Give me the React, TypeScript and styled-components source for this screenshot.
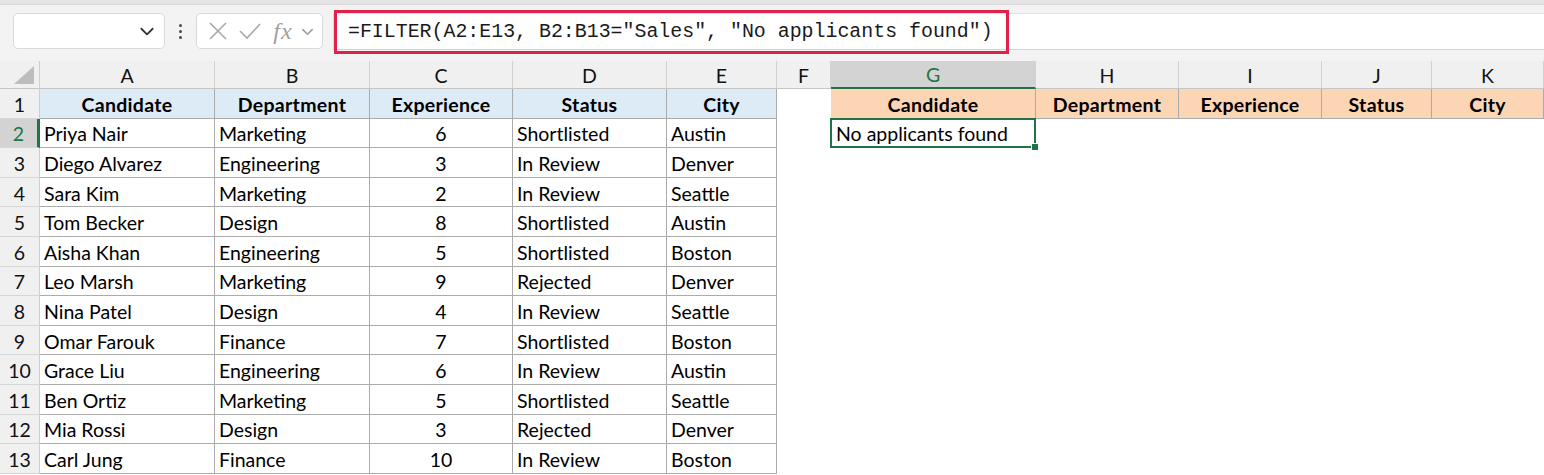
import React from "react";
import styled, { createGlobalStyle } from "styled-components";

const Global = createGlobalStyle`
  html, body { margin: 0; padding: 0; background: #ffffff; }
  body { font-family: Lato, "Open Sans", sans-serif; }
  * { box-sizing: border-box; }
`;

const Page = styled.div`
  width: 1544px;
  height: 475px;
  overflow: hidden;
  background: #ffffff;
  display: flex;
  flex-direction: column;
`;

const TopStrip = styled.div`
  height: 5px;
  background: #e4e4e4;
  border-bottom: 1px solid #d9d9d9;
`;

const FormulaBar = styled.div`
  height: 56px;
  background: #f3f3f3;
  display: flex;
  align-items: flex-start;
  padding: 8px 0 0 13px;
`;

const Box = styled.div<{ $w: number }>`
  width: ${(p) => p.$w}px;
  height: 36px;
  background: #ffffff;
  border: 1px solid #dadada;
  border-radius: 5px;
  display: flex;
  align-items: center;
`;

const NameBox = styled(Box)`
  justify-content: flex-end;
  padding-right: 8px;
`;

const Dots = styled.div`
  width: 31px;
  height: 36px;
  display: flex;
  flex-direction: column;
  align-items: center;
  justify-content: center;
  gap: 3px;
  span {
    width: 3px;
    height: 3px;
    border-radius: 50%;
    background: #4a4a4a;
  }
`;

const FxBox = styled(Box)`
  padding-left: 7px;
`;

const IconSlot = styled.div<{ $w: number }>`
  width: ${(p) => p.$w}px;
  display: flex;
  align-items: center;
  justify-content: center;
`;

const Fx = styled.span`
  font-family: "Liberation Serif", "DejaVu Serif", serif;
  font-style: italic;
  font-size: 24px;
  color: #a0a0a0;
  letter-spacing: 1px;
`;

const Input = styled.div`
  margin-left: 10px;
  flex: 1;
  height: 37px;
  background: #ffffff;
  border-top: 1px solid #e2e2e2;
  border-bottom: 1px solid #d4d4d4;
  border-left: 1px solid #dadada;
  display: flex;
  align-items: center;
  overflow: visible;
`;

const Highlight = styled.div`
  height: 44px;
  width: 675px;
  flex: none;
  border: 3px solid #e0214c;
  display: flex;
  align-items: center;
  padding-left: 11px;
  font-family: "Liberation Mono", "DejaVu Sans Mono", monospace;
  font-size: 19.9px;
  color: #1a1a1a;
  white-space: pre;
`;

const Sheet = styled.div`
  display: grid;
  grid-template-columns: 40px 175px 155px 143px 154px 110px 54px 205px 143px 143px 110px 1fr;
  grid-template-rows: 28px repeat(13, 29.6px);
  font-family: Lato, "Open Sans", sans-serif;
  font-size: 19.5px;
  color: #000;
`;

const Corner = styled.div`
  background: #f0f0f0;
  border-right: 1px solid #cfcfcf;
  border-bottom: 1px solid #c6c6c6;
  display: flex;
  align-items: flex-end;
  justify-content: flex-end;
  padding: 0 5px 4px 0;
`;

const ColHead = styled.div<{ $sel?: boolean }>`
  background: ${(p) => (p.$sel ? "#d3d3d3" : "#f0f0f0")};
  color: ${(p) => (p.$sel ? "#217346" : "#111")};
  border-right: 1px solid #d2d2d2;
  border-bottom: ${(p) => (p.$sel ? "2px solid #217346" : "1px solid #c6c6c6")};
  display: flex;
  align-items: center;
  justify-content: center;
  padding-top: 1px;
`;

const RowHead = styled.div<{ $sel?: boolean }>`
  background: ${(p) => (p.$sel ? "#d3d3d3" : "#f0f0f0")};
  color: ${(p) => (p.$sel ? "#217346" : "#111")};
  border-right: ${(p) => (p.$sel ? "3px solid #217346" : "1px solid #cfcfcf")};
  border-bottom: 1px solid #d6d6d6;
  display: flex;
  align-items: center;
  justify-content: center;
  padding-top: 2px;
`;

type Tone = "blue" | "peach" | "plain" | "none";

const toneBg: Record<Tone, string> = {
  blue: "#ddebf7",
  peach: "#fcd5b4",
  plain: "#ffffff",
  none: "#ffffff",
};

const Cell = styled.div<{ $tone: Tone; $bold?: boolean; $center?: boolean }>`
  background: ${(p) => toneBg[p.$tone]};
  font-weight: ${(p) => (p.$bold ? 700 : 400)};
  letter-spacing: ${(p) => (p.$bold ? "0.3px" : "0")};
  display: flex;
  align-items: center;
  justify-content: ${(p) => (p.$center ? "center" : "flex-start")};
  padding: 2px 4px 0;
  white-space: nowrap;
  border-right: ${(p) => (p.$tone === "none" ? "none" : "1px solid #ababab")};
  border-bottom: ${(p) => (p.$tone === "none" ? "none" : "1px solid #ababab")};
`;

const Selected = styled.div`
  position: relative;
  background: #ffffff;
  border: 2px solid #217346;
  margin: -1px 0 0 -1px;
  display: flex;
  align-items: center;
  padding: 2px 4px 0;
  white-space: nowrap;
`;

const Handle = styled.span`
  position: absolute;
  right: -5px;
  bottom: -5px;
  width: 8px;
  height: 8px;
  background: #217346;
  border: 1px solid #ffffff;
`;

const Chevron = ({ color = "#333", size = 16 }: { color?: string; size?: number }) => (
  <svg width={size} height={size} viewBox="0 0 16 16" fill="none">
    <path d="M3 6l5 5 5-5" stroke={color} strokeWidth="1.6" strokeLinecap="round" strokeLinejoin="round" />
  </svg>
);

const cols = ["A", "B", "C", "D", "E", "F", "G", "H", "I", "J", "K"];
const headers = ["Candidate", "Department", "Experience", "Status", "City"];

const data: [string, string, number, string, string][] = [
  ["Priya Nair", "Marketing", 6, "Shortlisted", "Austin"],
  ["Diego Alvarez", "Engineering", 3, "In Review", "Denver"],
  ["Sara Kim", "Marketing", 2, "In Review", "Seattle"],
  ["Tom Becker", "Design", 8, "Shortlisted", "Austin"],
  ["Aisha Khan", "Engineering", 5, "Shortlisted", "Boston"],
  ["Leo Marsh", "Marketing", 9, "Rejected", "Denver"],
  ["Nina Patel", "Design", 4, "In Review", "Seattle"],
  ["Omar Farouk", "Finance", 7, "Shortlisted", "Boston"],
  ["Grace Liu", "Engineering", 6, "In Review", "Austin"],
  ["Ben Ortiz", "Marketing", 5, "Shortlisted", "Seattle"],
  ["Mia Rossi", "Design", 3, "Rejected", "Denver"],
  ["Carl Jung", "Finance", 10, "In Review", "Boston"],
];

export default function App() {
  const rows: React.ReactNode[] = [];

  rows.push(<RowHead key="rh1">1</RowHead>);
  headers.forEach((h) =>
    rows.push(
      <Cell key={"b" + h} $tone="blue" $bold $center>
        {h}
      </Cell>
    )
  );
  rows.push(<Cell key="f1" $tone="none" />);
  headers.forEach((h) =>
    rows.push(
      <Cell key={"p" + h} $tone="peach" $bold $center>
        {h}
      </Cell>
    )
  );

  data.forEach((r, i) => {
    const n = i + 2;
    rows.push(
      <RowHead key={"rh" + n} $sel={n === 2}>
        {n}
      </RowHead>
    );
    rows.push(<Cell key={n + "a"} $tone="plain">{r[0]}</Cell>);
    rows.push(<Cell key={n + "b"} $tone="plain">{r[1]}</Cell>);
    rows.push(<Cell key={n + "c"} $tone="plain" $center>{r[2]}</Cell>);
    rows.push(<Cell key={n + "d"} $tone="plain">{r[3]}</Cell>);
    rows.push(<Cell key={n + "e"} $tone="plain">{r[4]}</Cell>);
    rows.push(<Cell key={n + "f"} $tone="none" />);
    if (n === 2) {
      rows.push(
        <Selected key="sel">
          No applicants found
          <Handle />
        </Selected>
      );
    } else {
      rows.push(<Cell key={n + "g"} $tone="none" />);
    }
    ["h", "i", "j", "k"].forEach((c) => rows.push(<Cell key={n + c} $tone="none" />));
  });

  return (
    <Page>
      <Global />
      <TopStrip />
      <FormulaBar>
        <NameBox $w={152}>
          <Chevron color="#333" size={18} />
        </NameBox>
        <Dots>
          <span />
          <span />
          <span />
        </Dots>
        <FxBox $w={127}>
          <IconSlot $w={28}>
            <svg width="20" height="20" viewBox="0 0 20 20">
              <path d="M2 2l16 16M18 2L2 18" stroke="#a8a8a8" strokeWidth="1.6" />
            </svg>
          </IconSlot>
          <IconSlot $w={36}>
            <svg width="24" height="20" viewBox="0 0 24 20">
              <path d="M2 10l7 7L22 3" stroke="#a8a8a8" strokeWidth="1.6" fill="none" />
            </svg>
          </IconSlot>
          <IconSlot $w={30}>
            <Fx>fx</Fx>
          </IconSlot>
          <IconSlot $w={18}>
            <Chevron color="#9a9a9a" size={15} />
          </IconSlot>
        </FxBox>
        <Input>
          <Highlight>{'=FILTER(A2:E13, B2:B13="Sales", "No applicants found")'}</Highlight>
        </Input>
      </FormulaBar>
      <Sheet>
        <Corner>
          <svg width="20" height="18" viewBox="0 0 20 18">
            <path d="M20 0L20 18L0 18Z" fill="#bdbdbd" />
          </svg>
        </Corner>
        {cols.map((c) => (
          <ColHead key={"c" + c} $sel={c === "G"}>
            {c}
          </ColHead>
        ))}
        {rows}
      </Sheet>
    </Page>
  );
}
